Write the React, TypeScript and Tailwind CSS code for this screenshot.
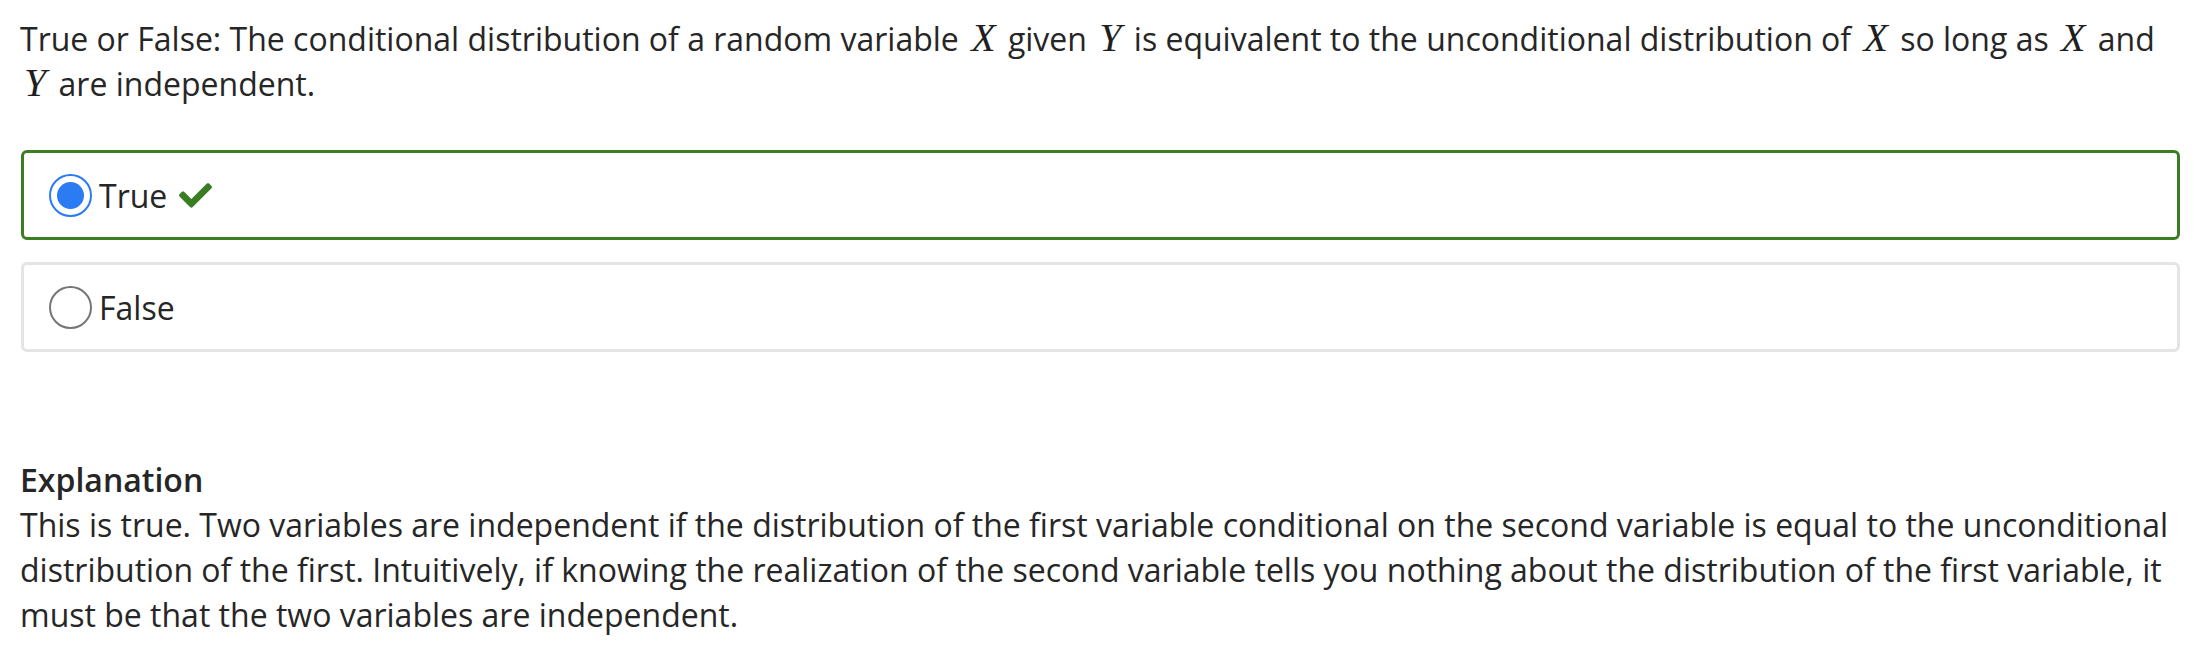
import React from 'react';

const MathVar = ({ children }: { children: React.ReactNode }) => (
  <span className="mx-[4px] font-['Liberation_Serif',serif] text-[40px] italic leading-none text-[#1f1f1f]">
    {children}
  </span>
);

function CheckIcon() {
  return (
    <svg viewBox="0 72 512 370" className="h-[25px] w-[33px]" fill="#3b7d23">
      <path d="M173.898 439.404l-166.4-166.4c-9.997-9.997-9.997-26.206 0-36.204l36.203-36.204c9.997-9.998 26.207-9.998 36.204 0L192 312.69 432.095 72.596c9.997-9.997 26.207-9.997 36.204 0l36.203 36.204c9.997 9.997 9.997 26.206 0 36.204l-294.4 294.401c-9.998 9.997-26.207 9.997-36.204-.001z" />
    </svg>
  );
}

function Option({ label, selected, correct }: { label: string; selected?: boolean; correct?: boolean }) {
  return (
    <div
      className={
        'flex h-[90px] items-center rounded-[6px] border-[3px] pl-[25px] ' +
        (correct ? 'border-[#3b7d23]' : 'border-[#e4e4e4]')
      }
    >
      {selected ? (
        <span className="flex h-[43px] w-[43px] items-center justify-center rounded-full border-2 border-[#2b7bf3]">
          <span className="h-[27px] w-[27px] rounded-full bg-[#2b7bf3]" />
        </span>
      ) : (
        <span className="h-[43px] w-[43px] rounded-full border-2 border-[#767676]" />
      )}
      <span className="ml-[7px] text-[32px] leading-[45px]">{label}</span>
      {correct && (
        <span className="ml-[12px] flex items-center">
          <CheckIcon />
        </span>
      )}
    </div>
  );
}

export default function App() {
  return (
    <div className="min-h-[648px] bg-white pl-[20px] pr-[26px] pt-[16px] font-['Open_Sans',sans-serif] text-[#262626]">
      <p className="text-[32px] leading-[45px]">
        True or False: The conditional distribution of a random variable <MathVar>X</MathVar> given{' '}
        <MathVar>Y</MathVar> is equivalent to the unconditional distribution of <MathVar>X</MathVar> so long as{' '}
        <MathVar>X</MathVar> and
        <br />
        <MathVar>Y</MathVar> are independent.
      </p>

      <div className="mt-[44px] flex flex-col gap-[22px] pl-px">
        <Option label="True" selected correct />
        <Option label="False" />
      </div>

      <div className="mt-[105px] text-[32px] leading-[45px]">
        <div className="font-semibold">Explanation</div>
        <p>
          This is true. Two variables are independent if the distribution of the first variable conditional on the
          second variable is equal to the unconditional distribution of the first. Intuitively, if knowing the
          realization of the second variable tells you nothing about the distribution of the first variable, it must
          be that the two variables are independent.
        </p>
      </div>
    </div>
  );
}
